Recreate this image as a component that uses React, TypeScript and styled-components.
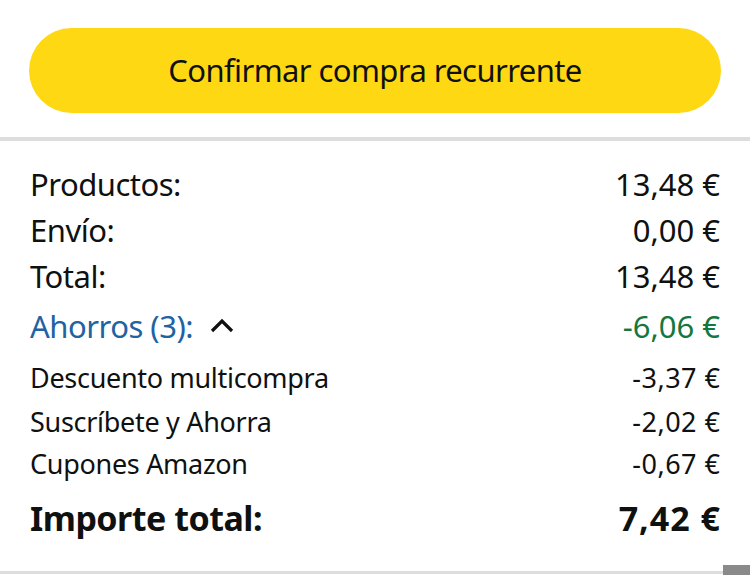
import React from "react";
import styled, { createGlobalStyle } from "styled-components";

const Global = createGlobalStyle`
  html, body { margin: 0; padding: 0; background: #fff; }
  body { font-family: "Noto Sans", "Open Sans", sans-serif; color: #0f1111; }
`;

const Page = styled.div`
  width: 750px;
  height: 577px;
  overflow: hidden;
  display: flex;
  flex-direction: column;
`;

const ButtonArea = styled.div`
  padding: 28px 29px 24px 29px;
`;

const ConfirmButton = styled.button`
  width: 100%;
  height: 85px;
  border: none;
  border-radius: 43px;
  background: #ffd814;
  color: #0f1111;
  font-family: "Noto Sans", "Open Sans", sans-serif;
  font-size: 31px;
  letter-spacing: -0.6px;
  display: flex;
  align-items: center;
  justify-content: center;
  padding: 0 0 2px;
`;

const Divider = styled.div<{ $h: number }>`
  height: ${(p) => p.$h}px;
  background: #dddddd;
  display: flex;
  justify-content: flex-end;
`;

const ScrollThumb = styled.div`
  width: 27px;
  height: 10px;
  margin-top: -6px;
  background: #8a8a8a;
`;

const BottomSpace = styled.div`
  height: 3px;
`;

const Summary = styled.div`
  padding: 20px 30px 0 30px;
  flex: 1;
  display: flex;
  flex-direction: column;
`;

const Row = styled.div<{ $h: number; $size: number; $bold?: boolean }>`
  height: ${(p) => p.$h}px;
  display: flex;
  align-items: center;
  justify-content: space-between;
  font-size: ${(p) => p.$size}px;
  font-weight: ${(p) => (p.$bold ? 700 : 400)};
  letter-spacing: ${(p) => (p.$size < 30 ? "-0.3px" : "-0.5px")};
  white-space: nowrap;
`;

const Label = styled.span<{ $color?: string }>`
  display: flex;
  align-items: center;
  gap: 17px;
  color: ${(p) => p.$color || "inherit"};
`;

const Amount = styled.span<{ $color?: string; $spacing?: number }>`
  color: ${(p) => p.$color || "inherit"};
  ${(p) => (p.$spacing !== undefined ? `letter-spacing: ${p.$spacing}px; margin-right: -${p.$spacing}px;` : "")}
`;

const Chevron = () => (
  <svg width="24" height="16" viewBox="0 0 24 16">
    <path d="M2 13 L12 3 L22 13" fill="none" stroke="#0f1111" strokeWidth="3.2" />
  </svg>
);

export default function App() {
  return (
    <Page>
      <Global />
      <ButtonArea>
        <ConfirmButton>Confirmar compra recurrente</ConfirmButton>
      </ButtonArea>
      <Divider $h={4} />
      <Summary>
        <Row $h={46} $size={31}>
          <Label>Productos:</Label>
          <Amount $spacing={0}>13,48 €</Amount>
        </Row>
        <Row $h={46} $size={31}>
          <Label>Envío:</Label>
          <Amount $spacing={0}>0,00 €</Amount>
        </Row>
        <Row $h={46} $size={31}>
          <Label>Total:</Label>
          <Amount $spacing={0}>13,48 €</Amount>
        </Row>
        <Row $h={54} $size={31}>
          <Label $color="#2162a1">
            Ahorros (3):
            <Chevron />
          </Label>
          <Amount $color="#13773f" $spacing={0}>-6,06 €</Amount>
        </Row>
        <Row $h={48} $size={27}>
          <Label>Descuento multicompra</Label>
          <Amount $spacing={0.5}>-3,37 €</Amount>
        </Row>
        <Row $h={40} $size={27}>
          <Label>Suscríbete y Ahorra</Label>
          <Amount $spacing={0.5}>-2,02 €</Amount>
        </Row>
        <Row $h={44} $size={27}>
          <Label>Cupones Amazon</Label>
          <Amount $spacing={0.5}>-0,67 €</Amount>
        </Row>
        <Row $h={66} $size={34} $bold>
          <Label>Importe total:</Label>
          <Amount $spacing={1}>7,42 €</Amount>
        </Row>
      </Summary>
      <Divider $h={3}>
        <ScrollThumb />
      </Divider>
      <BottomSpace />
    </Page>
  );
}
